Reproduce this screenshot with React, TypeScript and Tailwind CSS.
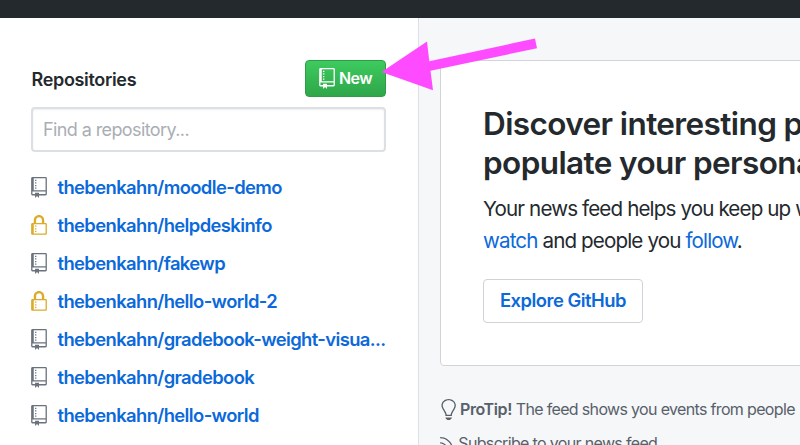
import { ReactNode } from "react"

type Repo = {
    name: string;
    isPrivate?: boolean;
}

const repos: Repo[] = [
    { name: "thebenkahn/moodle-demo" },
    { name: "thebenkahn/helpdeskinfo", isPrivate: true },
    { name: "thebenkahn/fakewp" },
    { name: "thebenkahn/hello-world-2", isPrivate: true },
    { name: "thebenkahn/gradebook-weight-visua..." },
    { name: "thebenkahn/gradebook" },
    { name: "thebenkahn/hello-world" },
]

function RepoIcon({ className }: { className: string }) {
    return (
        <svg viewBox="0 0 12 16" className={className} fill="currentColor">
            <path fillRule="evenodd" d="M4 9H3V8h1v1zm0-3H3v1h1V6zm0-2H3v1h1V4zm0-2H3v1h1V2zm8-1v12c0 .55-.45 1-1 1H6v2l-1.5-1.5L3 16v-2H1c-.55 0-1-.45-1-1V1c0-.55.45-1 1-1h10c.55 0 1 .45 1 1zm-1 10H1v2h2v-1h3v1h5v-2zm0-10H2v9h9V1z" />
        </svg>
    )
}

function LockIcon({ className }: { className: string }) {
    return (
        <svg viewBox="0 0 12 16" className={className} fill="currentColor">
            <path fillRule="evenodd" d="M4 13H3v-1h1v1zm8-6v7c0 .55-.45 1-1 1H1c-.55 0-1-.45-1-1V7c0-.55.45-1 1-1h1V4c0-2.2 1.8-4 4-4s4 1.8 4 4v2h1c.55 0 1 .45 1 1zM3.8 6h4.41V4c0-1.22-.98-2.2-2.2-2.2-1.22 0-2.2.98-2.2 2.2v2H3.8zM11 7H2v7h9V7zM4 8H3v1h1V8zm0 2H3v1h1v-1z" />
        </svg>
    )
}

function BulbIcon() {
    return (
        <svg viewBox="0 0 12 16" className="w-4 h-[21px] shrink-0" fill="currentColor">
            <path fillRule="evenodd" d="M6.5 0C3.48 0 1 2.19 1 5c0 .92.55 2.25 1 3 1.34 2.25 1.78 2.78 2 4v1h5v-1c.22-1.22.66-1.75 2-4 .45-.75 1-2.08 1-3 0-2.81-2.48-5-5.5-5zm3.64 7.48c-.25.44-.47.8-.67 1.11-.86 1.41-1.25 2.06-1.45 3.23-.02.05-.02.11-.02.17H5c0-.06 0-.13-.02-.17-.2-1.17-.59-1.83-1.45-3.23-.2-.31-.42-.67-.67-1.11C2.44 6.78 2 5.65 2 5c0-2.2 2.02-4 4.5-4 1.22 0 2.36.42 3.22 1.19C10.55 2.94 11 3.94 11 5c0 .66-.44 1.78-.86 2.48zM4 14h5c-.23 1.14-1.3 2-2.5 2s-2.27-.86-2.5-2z" />
        </svg>
    )
}

function FeedIcon() {
    return (
        <svg viewBox="0 0 10 16" className="w-[13.3px] h-[21px] shrink-0" fill="currentColor">
            <path fillRule="evenodd" d="M2 13H0v-2c1.11 0 2 .89 2 2zM0 3v1a9 9 0 0 1 9 9h1C10 7.48 5.52 3 0 3zm0 4v1c2.75 0 5 2.25 5 5h1c0-3.31-2.69-6-6-6z" />
        </svg>
    )
}

function Link({ children }: { children: ReactNode }) {
    return <a href="#" className="text-[#0b69da]">{children}</a>
}

function Sidebar() {
    return (
        <aside className="w-[419px] shrink-0 bg-white border-r border-[#dcdfe4] pl-[31px] pr-8 pt-[42px]">
            <div className="flex items-center justify-between h-[37px]">
                <h2 className="text-[18px] font-semibold tracking-[-0.33px] pl-[0.5px] pt-[2px]">Repositories</h2>
                <button className="flex items-center h-[37px] w-[81px] pl-[13px] rounded-[4px] border border-[#2f9c48] bg-linear-to-b from-[#3dcb5e] to-[#2fa64a] text-white text-[16px] font-semibold tracking-[-0.6px]">
                    <RepoIcon className="w-4 h-[21px] mr-1 shrink-0" />
                    <span className="-mt-px">New</span>
                </button>
            </div>
            <input
                type="text"
                placeholder="Find a repository..."
                className="block mt-[10px] w-[355px] h-[45px] rounded-[4px] border-2 border-[#dcdfe3] px-[10px] text-[18px] tracking-[-0.6px] placeholder:text-[#a9aeb4] shadow-[inset_0_1px_2px_rgba(27,31,35,0.07)]"
            />
            <ul className="mt-[17px]">
                {repos.map((repo) => (
                    <li key={repo.name} className="flex items-center h-[38px] whitespace-nowrap">
                        {repo.isPrivate ? (
                            <LockIcon className="w-4 h-[21px] mr-[10.5px] mb-[2px] shrink-0 text-[#dbab2a]" />
                        ) : (
                            <RepoIcon className="w-4 h-[21px] mr-[10.5px] mb-[2px] shrink-0 text-[#6a737d]" />
                        )}
                        <a href="#" className="text-[18.4px] font-semibold tracking-[-0.6px] text-[#0b69da]">{repo.name}</a>
                    </li>
                ))}
            </ul>
        </aside>
    )
}

function Feed() {
    return (
        <main className="flex-1 min-w-0 pl-[21px] pt-[42px] whitespace-nowrap">
            <section className="h-[306px] w-[420px] rounded-[4px] border-[1.5px] border-[#d1d5da] bg-white pl-[42px] pt-[43px]">
                <h1 className="text-[31.5px] leading-[39px] font-semibold tracking-[-0.6px]">
                    Discover interesting projects<br />
                    populate your personal
                </h1>
                <p className="mt-[11px] text-[20.6px] leading-[32px] tracking-[-0.87px]">
                    Your news feed helps you keep up with<br />
                    <Link>watch</Link> and people you <Link>follow</Link>.
                </p>
                <button className="mt-[22px] h-[44px] w-[160px] rounded-[4px] border border-[#cfd2d6] text-[18.4px] font-semibold tracking-[-0.5px] text-[#0b69da]">
                    Explore GitHub
                </button>
            </section>
            <div className="mt-[32px] text-[16px] tracking-[-0.66px] text-[#586069]">
                <p className="flex items-center h-[22px] gap-1">
                    <BulbIcon />
                    <span><b className="font-semibold tracking-[-0.4px]">ProTip!</b> The feed shows you events from people</span>
                </p>
                <p className="flex items-center h-[22px] mt-[12px] gap-[5px]">
                    <FeedIcon />
                    <span>Subscribe to your news feed</span>
                </p>
            </div>
        </main>
    )
}

// Callout pointing at the "New" button
function Arrow() {
    return (
        <svg viewBox="0 0 160 54" className="absolute left-[380px] top-[38px] w-[160px] h-[54px]" fill="#ff4bff">
            <path d="M1.5 34 47 3.5l2.3 19.8L155 .5l2 9.7L50.5 32.8 53 52.3z" />
        </svg>
    )
}

export default function App() {
    return (
        <div className="relative flex flex-col w-[800px] h-[445px] overflow-hidden bg-[#f5f7f9] font-['Inter','Liberation_Sans',sans-serif] text-[#24292e]">
            <header className="h-[18px] shrink-0 bg-[#24292e]" />
            <div className="flex flex-1 min-h-0">
                <Sidebar />
                <Feed />
            </div>
            <Arrow />
        </div>
    )
}
